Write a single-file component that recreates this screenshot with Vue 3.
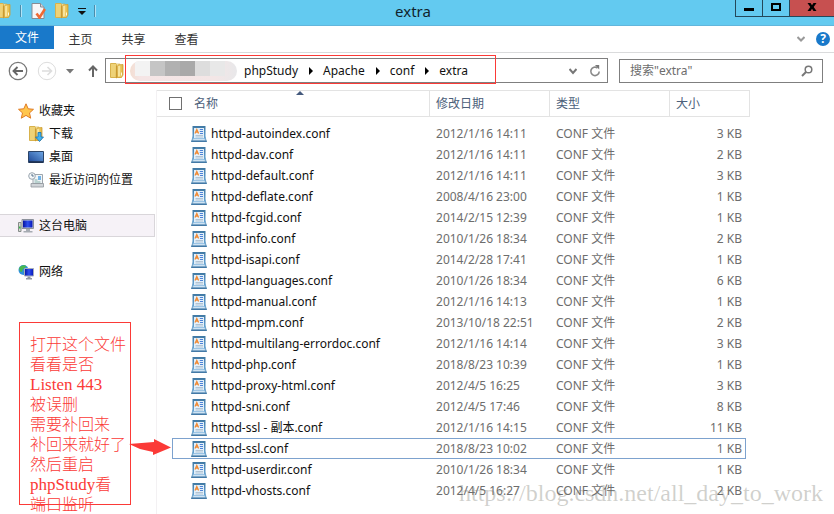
<script setup>
import { ref } from 'vue'

const tabs = ['文件', '主页', '共享', '查看']
const activeTab = ref('文件')
const crumbs = ['phpStudy', 'Apache', 'conf', 'extra']
const query = ref('')
const allChecked = ref(false)
const selected = ref('httpd-ssl.conf')

const places = [
  { label: '收藏夹', icon: 'star', level: 0 },
  { label: '下载', icon: 'download', level: 1 },
  { label: '桌面', icon: 'desktop', level: 1 },
  { label: '最近访问的位置', icon: 'recent', level: 1 },
  { label: '这台电脑', icon: 'pc', level: 0, gap: true, active: true },
  { label: '网络', icon: 'network', level: 0, gap: true },
]

const files = [
  ['httpd-autoindex.conf', '2012/1/16 14:11', 3],
  ['httpd-dav.conf', '2012/1/16 14:11', 2],
  ['httpd-default.conf', '2012/1/16 14:11', 3],
  ['httpd-deflate.conf', '2008/4/16 23:00', 1],
  ['httpd-fcgid.conf', '2014/2/15 12:39', 1],
  ['httpd-info.conf', '2010/1/26 18:34', 2],
  ['httpd-isapi.conf', '2014/2/28 17:41', 1],
  ['httpd-languages.conf', '2010/1/26 18:34', 6],
  ['httpd-manual.conf', '2012/1/16 14:13', 1],
  ['httpd-mpm.conf', '2013/10/18 22:51', 2],
  ['httpd-multilang-errordoc.conf', '2012/1/16 14:14', 3],
  ['httpd-php.conf', '2018/8/23 10:39', 1],
  ['httpd-proxy-html.conf', '2012/4/5 16:25', 3],
  ['httpd-sni.conf', '2012/4/5 17:46', 8],
  ['httpd-ssl - 副本.conf', '2012/1/16 14:15', 11],
  ['httpd-ssl.conf', '2018/8/23 10:02', 1],
  ['httpd-userdir.conf', '2010/1/26 18:34', 1],
  ['httpd-vhosts.conf', '2012/4/5 16:27', 2],
].map(([name, date, size]) => ({ name, date, size }))
</script>

<template>
  <div class="window">
    <svg class="defs" aria-hidden="true">
      <defs>
        <linearGradient id="gold" x1="0" x2="1">
          <stop offset="0" stop-color="#fbe38a" />
          <stop offset="1" stop-color="#dfb440" />
        </linearGradient>
        <linearGradient id="screen" x1="0" y1="1" x2="1" y2="0">
          <stop offset="0" stop-color="#1c4694" />
          <stop offset="1" stop-color="#6fa8e6" />
        </linearGradient>
        <linearGradient id="blue" x1="0" x2="1">
          <stop offset="0" stop-color="#0612a0" />
          <stop offset="0.5" stop-color="#2f50f0" />
          <stop offset="1" stop-color="#0616b8" />
        </linearGradient>
        <linearGradient id="frame" x1="0" y1="0" x2="0" y2="1">
          <stop offset="0" stop-color="#3f78a3" />
          <stop offset="1" stop-color="#69a7d6" />
        </linearGradient>
        <symbol id="folder" viewBox="0 0 16 16">
          <path d="M1.500 .5h5.500l1 1v13H1.500z" fill="#eed277" stroke="#d8b24c" />
          <path d="M7.500 1h3.500v13.500H7z" fill="#fff0b4" stroke="#d2a73c" stroke-width=".6" />
          <path d="M7 2.500h1.500v12L7 15.500z" fill="#c99a30" />
          <path d="M9 2l5-.5v10.500l-1.500 2.500H8.500z" fill="url(#gold)" stroke="#cfa033" stroke-width=".8" />
          <path d="M10 3v10" stroke="#fff5c5" />
          <path d="M12.500 9.500v3" stroke="#fff8da" />
        </symbol>
        <symbol id="doc" viewBox="0 0 16 16">
          <path d="M1.500 10.500L0 16h16l-1.500-5.500z" fill="#7fabcd" />
          <path d="M1.500 0h13v13h-13z" fill="url(#frame)" />
          <path d="M3 2h10v10H3z" fill="#e3f0fa" />
          <path d="M2.500 12.500h11l.6 2H1.900z" fill="#cfe3f3" />
          <path d="M.3 15.300h15.400" stroke="#4379a6" stroke-width="1.400" />
          <path d="M4 7.500L5.800 3.500 7.600 7.500M4.800 6.200h2" fill="none" stroke="#f08a35" stroke-width="1.300" />
          <path d="M8.800 3.500h3.200M8.800 5.500h3.200M9 7.500h3" stroke="#4d82d6" />
          <path d="M4.500 9.500h7.500M4.500 11h7.500" stroke="#a3b8ca" stroke-width=".8" />
        </symbol>
      </defs>
    </svg>

    <header class="titlebar">
      <div class="quick">
        <svg class="i16 first"><use href="#folder" /></svg>
        <i class="sep"></i>
        <button class="plain" aria-label="属性">
          <svg class="i16" viewBox="0 0 16 16">
            <path d="M2 .5h8.500L14 4v11.500H2z" fill="#f6f6f8" stroke="#858b94" />
            <path d="M10.500 .5V4H14" fill="#d5d8dd" stroke="#858b94" />
            <path d="M6.500 10.500l3 4L15 6" fill="none" stroke="#ef6a34" stroke-width="2.600" />
          </svg>
        </button>
        <button class="plain" aria-label="新建文件夹"><svg class="i16"><use href="#folder" /></svg></button>
        <button class="plain" aria-label="自定义快速访问工具栏">
          <svg class="i8" viewBox="0 0 8 8"><path d="M0 1h8v1H0zM0 4h8L4 8z" fill="#111" /></svg>
        </button>
        <i class="sep"></i>
      </div>
      <h1>extra</h1>
      <div class="controls">
        <button class="ctl min" aria-label="最小化"><svg viewBox="0 0 12 10"><path d="M1 6h10v3H1z" /></svg></button>
        <button class="ctl max" aria-label="最大化"><svg viewBox="0 0 12 10"><path d="M1 1h10v8H1zm2 2v4h6V3z" fill-rule="evenodd" /></svg></button>
        <button class="ctl close" aria-label="关闭"><svg viewBox="0 0 12 10"><path d="M1.500 1h3L6 3.300 7.500 1h3L7.700 5l2.800 4h-3L6 6.700 4.500 9h-3l2.800-4z" /></svg></button>
      </div>
    </header>

    <nav class="ribbon">
      <button v-for="t in tabs" :key="t" class="tab" :class="{ on: t === activeTab }" @click="activeTab = t">{{ t }}</button>
      <button class="plain push" aria-label="展开功能区">
        <svg class="i8" viewBox="0 0 8 8"><path d="M.5 2L4 5.500 7.500 2" fill="none" stroke="#999" stroke-width="2" /></svg>
      </button>
      <button class="help" aria-label="帮助">?</button>
    </nav>

    <div class="navbar">
      <div class="arrows">
        <button class="plain" aria-label="后退">
          <svg class="i20" viewBox="0 0 20 20"><circle cx="10" cy="10" r="8.700" fill="none" stroke="#777" stroke-width="1.300" /><path d="M15 10H6M9.500 6l-4 4 4 4" fill="none" stroke="#666" stroke-width="1.900" /></svg>
        </button>
        <button class="plain" aria-label="前进">
          <svg class="i20" viewBox="0 0 20 20"><circle cx="10" cy="10" r="8.700" fill="none" stroke="#ddd" /><path d="M5 10h9M10.500 6l4 4-4 4" fill="none" stroke="#ddd" stroke-width="1.600" /></svg>
        </button>
        <button class="plain" aria-label="最近的位置"><svg class="i8" viewBox="0 0 8 8"><path d="M0 2h8L4 6.500z" fill="#777" /></svg></button>
        <button class="plain up" aria-label="上移"><svg class="i12" viewBox="0 0 12 12"><path d="M6 12V1.500M2 5.500l4-4 4 4" fill="none" stroke="#666" stroke-width="2" /></svg></button>
      </div>
      <div class="address">
        <svg class="i16"><use href="#folder" /></svg>
        <span class="redacted"><i></i><i></i><i></i><i></i><i></i><i></i></span>
        <template v-for="(c, n) in crumbs" :key="c">
          <svg v-if="n" class="chev" viewBox="0 0 4 8"><path d="M0 0l4 4-4 4z" /></svg>
          <button class="crumb">{{ c }}</button>
        </template>
        <button class="plain push" aria-label="历史记录">
          <svg class="i8" viewBox="0 0 8 8"><path d="M.5 2L4 6l3.500-4" fill="none" stroke="#777" stroke-width="2" /></svg>
        </button>
        <button class="plain" aria-label="刷新">
          <svg class="i12" viewBox="0 0 12 12"><path d="M8.500 3A4.200 4.200 0 1 0 10.200 6.500" fill="none" stroke="#888" stroke-width="1.600" /><path d="M6 0h4.200v4.500z" fill="#777" /></svg>
        </button>
        <div class="path-frame callout"></div>
      </div>
      <label class="search">
        <input v-model="query" type="text" placeholder='搜索"extra"' aria-label="搜索" />
        <svg class="i12" viewBox="0 0 12 12"><circle cx="7.500" cy="4.500" r="3.300" fill="none" stroke="#777" stroke-width="1.500" /><path d="M5 7L1 11" stroke="#777" stroke-width="2" /></svg>
      </label>
    </div>

    <div class="body">
      <aside class="side">
        <a v-for="p in places" :key="p.label" href="#" class="place" :class="{ sub: p.level, gap: p.gap, active: p.active }">
          <svg class="i16" viewBox="0 0 16 16">
            <path v-if="p.icon === 'star'" d="M8 .8l2.200 5 5.300.5-4 3.600 1.200 5.300L8 12.400l-4.700 2.800 1.200-5.300-4-3.600 5.300-.5z" fill="#ffc64d" stroke="#e07b25" />
            <g v-else-if="p.icon === 'download'">
              <use href="#folder" width="16" height="16" />
              <path d="M10 6.500h3V11h2.500L11.500 15.500 7.500 11H10z" fill="#42b4f1" stroke="#1671b4" stroke-width=".8" />
            </g>
            <g v-else-if="p.icon === 'desktop'">
              <path d="M.5 2.500h15v11H.5z" fill="url(#screen)" stroke="#2b4468" />
              <path d="M1 13h14" stroke="#1d2c48" stroke-width="1.500" />
            </g>
            <g v-else-if="p.icon === 'recent'">
              <path d="M5 2.500h9.500v9H5z" fill="#f1f5f8" stroke="#9da5ac" />
              <path d="M10 4h3v4h-3z" fill="#72b4e8" />
              <path d="M6.500 8h3M6.500 10h6" stroke="#82b0a8" />
              <path d="M3 11.500h12.500V15H3z" fill="#d0d4d8" stroke="#8f969c" stroke-width=".8" />
              <circle cx="4" cy="4" r="3.300" fill="#f5f8fa" stroke="#9aa5ae" />
              <path d="M4 2v2h1.800" fill="none" stroke="#55718a" />
            </g>
            <g v-else-if="p.icon === 'pc'">
              <path d="M.5 4.500h2.500v9H.5z" fill="#d8dcd6" stroke="#858b88" />
              <path d="M1 9.500h1.500" stroke="#39b54a" stroke-width="2" />
              <path d="M4 1.500h11.500v9H4z" fill="#c8ccd4" stroke="#8c919b" />
              <path d="M5 2.500h9.500v7H5z" fill="url(#blue)" />
              <path d="M8 11h4v2h2.500v1.500h-9V13H8z" fill="#a6abb2" />
            </g>
            <g v-else>
              <circle cx="5.500" cy="6" r="5" fill="#2d8fe0" />
              <path d="M1 4.500C3 0 8 1 8.500 2.500L5 5l-1 3-2-.5zM5.500 8l2.500 1-1.500 2z" fill="#49b84d" />
              <path d="M6.500 4.500h9v7.500h-9z" fill="url(#blue)" stroke="#a7adba" />
              <path d="M9.500 12.500h3V14h1.500v1.500h-6V14h1.500z" fill="#9298a1" />
            </g>
          </svg>
          <span>{{ p.label }}</span>
        </a>
      </aside>

      <main class="list">
        <table>
          <colgroup><col class="c-pad" /><col class="c-name" /><col class="c-date" /><col class="c-type" /><col class="c-size" /><col class="c-end" /></colgroup>
          <thead>
            <tr>
              <th colspan="2" class="h-name">
                <label><input v-model="allChecked" type="checkbox" />名称</label>
                <svg class="sort" viewBox="0 0 8 4"><path d="M0 4l4-4 4 4z" fill="#44597d" /></svg>
              </th>
              <th>修改日期</th>
              <th>类型</th>
              <th colspan="2">大小</th>
            </tr>
          </thead>
          <tbody>
            <tr v-for="f in files" :key="f.name" :class="{ sel: f.name === selected }" @click="selected = f.name">
              <td class="edge"></td>
              <td class="name"><div><svg class="i16"><use href="#doc" /></svg>{{ f.name }}</div></td>
              <td>{{ f.date }}</td>
              <td>CONF 文件</td>
              <td class="size">{{ f.size }} KB</td>
              <td class="edge"></td>
            </tr>
          </tbody>
        </table>
      </main>
    </div>

    <div class="note callout">
      打开这个文件<br />看看是否<br /><span>Listen 443</span><br />被误删<br />需要补回来<br />补回来就好了<br />然后重启<br /><span>phpStudy</span>看<br />端口监听
    </div>
    <svg class="pointer" viewBox="0 0 42 18"><path d="M0 6l25-2V1l17 8.500L24 17v-3L11 11z" fill="#fb3a37" /></svg>
    <div class="watermark">https://blog.csdn.net/all_day_to_work</div>
  </div>
</template>

<style>
body {
  margin: 0;
  background: #fff;
}
</style>

<style scoped>
* {
  box-sizing: border-box;
}
.window {
  position: relative;
  min-height: 100vh;
  overflow: hidden;
  display: flex;
  flex-direction: column;
  background: #fff;
  color: #111;
  font: 12px/20px "Noto Sans", "Noto Sans CJK SC", sans-serif;
}
.defs {
  position: absolute;
  width: 0;
  height: 0;
}
button {
  font: inherit;
  color: inherit;
  background: none;
  border: 0;
  padding: 0;
}
svg {
  display: block;
  flex: none;
}
.i8 { width: 8px; height: 8px; }
.i12 { width: 12px; height: 12px; }
.i16 { width: 16px; height: 16px; }
.i20 { width: 20px; height: 20px; }

.titlebar {
  height: 26px;
  display: grid;
  grid-template-columns: 1fr auto 1fr;
  background: #63caf0;
  border-bottom: 1px solid #62b6dc;
}
.quick {
  display: flex;
  align-items: center;
  gap: 8px;
  height: 21px;
}
.quick .first {
  margin-left: -4px;
}
.sep {
  width: 2px;
  height: 12px;
  background: #4a8dac;
  border-right: 1px solid #b2e3f6;
}
h1 {
  margin: 0;
  padding-right: 8px;
  font-size: 15px;
  font-weight: 400;
  line-height: 22px;
  color: #10242d;
}
.controls {
  display: flex;
  justify-content: flex-end;
  align-items: flex-start;
}
.ctl {
  width: 27px;
  height: 17px;
  padding: 2px 0 5px;
  border: solid #24485a;
  border-width: 0 0 1px 1px;
  display: flex;
  justify-content: center;
}
.ctl svg {
  width: 12px;
  height: 10px;
}
.ctl.close {
  width: 45px;
  background: #c75050;
}

.ribbon {
  height: 27px;
  display: flex;
  align-items: center;
  border-bottom: 1px solid #dadbdc;
  padding-right: 4px;
  color: #333;
}
.tab {
  width: 53px;
  height: 23px;
  align-self: flex-start;
  padding-top: 4px;
}
.tab.on {
  width: 54px;
  padding-top: 0;
  background: #1979ca;
  color: #fff;
}
.push {
  margin-left: auto;
}
.help {
  width: 14px;
  height: 14px;
  margin-left: 11px;
  border-radius: 50%;
  background: #1979ca;
  color: #fff;
  font-weight: 700;
  line-height: 14px;
}

.navbar {
  display: flex;
  align-items: center;
  gap: 11px;
  height: 37px;
  padding: 0 11px 2px 8px;
}
.arrows {
  display: flex;
  align-items: center;
  gap: 9px;
  width: 86px;
}
.arrows .up {
  margin-left: 4px;
}
.address {
  position: relative;
  flex: 1;
  height: 25px;
  display: flex;
  align-items: center;
  padding: 0 6px 0 3px;
  border: 1px solid #7f7f7f;
}
.address > .plain + .plain {
  margin-left: 12px;
}
.redacted {
  display: flex;
  width: 107px;
  height: 20px;
  margin: 0 7px 0 5px;
  padding: 0 12px 5px 5px;
  border-radius: 10px;
  background: linear-gradient(90deg, #f3ded2, #f5e5e5 10%, #f3e6e6 80%, #e8e8ea);
  overflow: hidden;
}
.redacted i {
  flex: 1;
  background: #f3f3f3;
}
.redacted i:nth-child(2) { background: #c5c5c5; }
.redacted i:nth-child(3) { background: #b1b1b1; }
.redacted i:nth-child(4) { background: #a9a9a9; }
.redacted i:nth-child(5) { background: #dddddd; }
.redacted i:nth-child(6) { background: #e8e8e8; }
.chev {
  width: 4px;
  height: 8px;
  margin: 0 10px 0 11px;
}
.search {
  display: flex;
  align-items: center;
  width: 204px;
  height: 24px;
  padding: 0 9px 0 10px;
  border: 1px solid #7f7f7f;
}
.search input {
  flex: 1;
  min-width: 0;
  padding: 0;
  border: 0;
  outline: 0;
  background: none;
  font: inherit;
}
.search input::placeholder {
  color: #6d6d6d;
}

.body {
  flex: 1;
  display: flex;
}
.side {
  width: 157px;
  flex: none;
  padding: 9px 1px 0 0;
  border-right: 1px solid #f3f1f3;
}
.place {
  display: flex;
  align-items: center;
  gap: 5px;
  height: 23px;
  padding-left: 18px;
  border: solid transparent;
  border-width: 1px 1px 1px 0;
  color: #111;
  text-decoration: none;
}
.place.sub {
  padding-left: 28px;
}
.place.gap {
  margin-top: 23px;
}
.place.active {
  background: #f6f2f7;
  border-color: #d9d6da;
}
.list {
  flex: 1;
}
table {
  table-layout: fixed;
  width: 593px;
  border-collapse: separate;
  border-spacing: 0;
}
.c-pad { width: 15px; }
.c-name { width: 258px; }
.c-date, .c-type { width: 120px; }
.c-size { width: 76px; }
.c-end { width: 4px; }
th {
  height: 27px;
  padding: 0 0 0 6px;
  border: solid #e3e3e3;
  border-width: 1px 1px 1px 0;
  font-weight: 400;
  text-align: left;
  color: #4c607a;
}
.h-name {
  position: relative;
  padding-left: 12px;
}
.h-name label {
  display: flex;
  align-items: center;
  gap: 12px;
}
.h-name input {
  appearance: none;
  width: 13px;
  height: 13px;
  margin: 0;
  border: 1px solid #707070;
  background: #fff;
}
.h-name input:checked {
  background: #1979ca;
}
.sort {
  position: absolute;
  left: 139px;
  top: 0;
  width: 8px;
  height: 4px;
}
tbody::before {
  content: "";
  display: block;
  height: 6px;
}
td {
  height: 21px;
  padding: 0 0 0 6px;
  border: solid transparent;
  border-width: 1px 0;
  line-height: 19px;
  color: #6d6d6d;
  white-space: nowrap;
}
td.edge {
  padding: 0;
  border: 0;
}
.name {
  padding-left: 18px;
  border-left-width: 1px;
  color: #111;
}
.name div {
  display: flex;
  align-items: center;
  gap: 4px;
}
.size {
  padding: 0 3px 0 0;
  border-right-width: 1px;
  text-align: right;
}
.sel td:not(.edge) {
  border-color: #7da2ce;
}

/* Tutorial call-outs laid over the window */
.callout {
  position: absolute;
  border: 1px solid #fb3a37;
}
.path-frame {
  left: 19px;
  top: -4px;
  z-index: 2;
  width: 371px;
  height: 29px;
  pointer-events: none;
}
.note {
  left: 19px;
  top: 322px;
  width: 112px;
  height: 183px;
  padding: 10px 0 0 10px;
  color: #fb3a37;
  font: 300 16px/20px "Noto Sans CJK SC", sans-serif;
  white-space: nowrap;
}
.note span {
  font: 17px/1px "Liberation Serif", serif;
}
.pointer {
  position: absolute;
  left: 129px;
  top: 438px;
  width: 42px;
  height: 18px;
}
.watermark {
  position: absolute;
  right: 11px;
  top: 479px;
  font: 24px/28px "Liberation Serif", serif;
  color: rgba(120, 120, 110, 0.35);
  pointer-events: none;
}
</style>
